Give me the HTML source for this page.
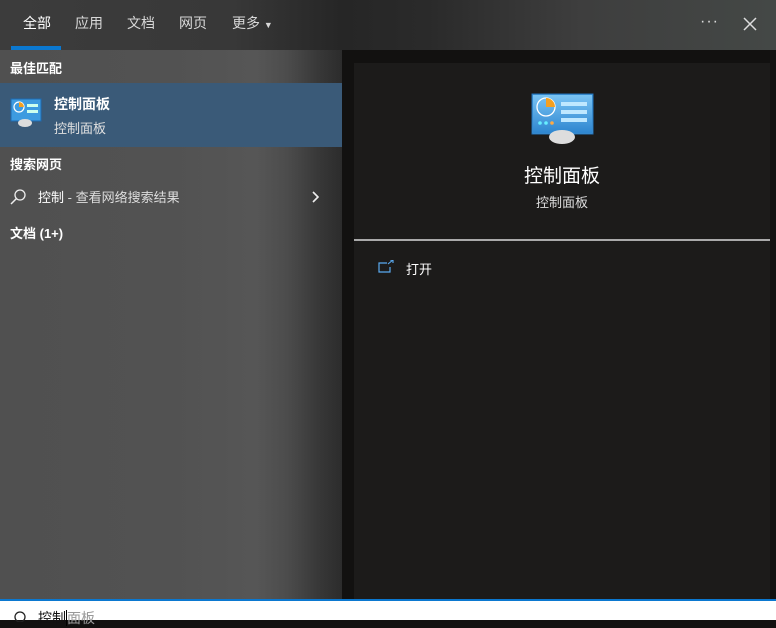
<!DOCTYPE html>
<html><head><meta charset="utf-8"><style>
*{margin:0;padding:0;box-sizing:border-box}
body{width:776px;height:620px;overflow:hidden;position:relative;font-family:"Liberation Sans","Noto Sans CJK SC",sans-serif;background:#121110}
.top{position:absolute;left:0;top:0;width:776px;height:50px;background:linear-gradient(90deg,#3c3c3c 0%,#383838 30%,#262626 44%,#2a2a2a 55%,#3e3e3e 75%,#444846 100%)}
.tab{position:absolute;top:13px;color:#d8d8d8;font-size:14px}
.left{position:absolute;left:0;top:50px;width:342px;height:549px;background:linear-gradient(90deg,#505050 0%,#525252 50%,#565656 75%,#4c4c4c 84%,#383838 93%,#2c2c2c 100%)}
.h{position:absolute;left:10px;color:#fff;font-size:13px;font-weight:bold}
.right{position:absolute;left:354px;top:63px;width:416px;height:536px;background:#1c1b1a}
</style></head><body>
<div class="top">
<div class="tab" style="left:23px;color:#fff">全部</div>
<div class="tab" style="left:75px">应用</div>
<div class="tab" style="left:127px">文档</div>
<div class="tab" style="left:179px">网页</div>
<div class="tab" style="left:232px">更多 <span style="font-size:9px">▼</span></div>
<div style="position:absolute;left:11px;top:46px;width:50px;height:4px;background:#0b78d0"></div>
<div style="position:absolute;left:700px;top:13px;color:#ddd;font-size:16px;letter-spacing:1px">···</div>
<svg style="position:absolute;left:743px;top:17px" width="14" height="14"><path d="M1 1L13 13M13 1L1 13" stroke="#ddd" stroke-width="1.5"/></svg>
</div>
<div class="left">
<div class="h" style="top:8px">最佳匹配</div>
<div style="position:absolute;left:0;top:33px;width:342px;height:64px;background:#3a5a78"></div>
<svg style="position:absolute;left:10px;top:48px" width="32" height="30"><rect x="1" y="1" width="30" height="22" fill="#3d9be0" stroke="#1d6ab0"/><circle cx="9" cy="9" r="5" fill="none" stroke="#fff" stroke-width="1.2"/><path d="M9 4a5 5 0 0 1 5 5h-5z" fill="#f5a020"/><rect x="17" y="6" width="11" height="3" fill="#cfe"/><rect x="17" y="12" width="11" height="3" fill="#cfe"/><ellipse cx="15" cy="25" rx="7" ry="4" fill="#ddd"/></svg>
<div style="position:absolute;left:54px;top:44px;color:#fff;font-size:14px;font-weight:bold">控制面板</div>
<div style="position:absolute;left:54px;top:68px;color:#e0e0e0;font-size:13px">控制面板</div>
<div class="h" style="top:104px">搜索网页</div>
<svg style="position:absolute;left:10px;top:139px" width="16" height="16"><circle cx="10" cy="6" r="5" fill="none" stroke="#eee" stroke-width="1.3"/><path d="M6.5 9.5L1 15" stroke="#eee" stroke-width="1.5"/></svg>
<div style="position:absolute;left:38px;top:137px;color:#fff;font-size:13px">控制 <span style="color:#ddd">- 查看网络搜索结果</span></div>
<svg style="position:absolute;left:312px;top:141px" width="8" height="12"><path d="M1 1L6 6L1 11" stroke="#eee" stroke-width="1.6" fill="none"/></svg>
<div class="h" style="top:173px">文档 (1+)</div>
</div>
<div class="right">
<svg style="position:absolute;left:177px;top:30px" width="64" height="52"><defs><linearGradient id="g" x1="0" y1="0" x2="0" y2="1"><stop offset="0" stop-color="#7ac4f4"/><stop offset="1" stop-color="#2e86d0"/></linearGradient></defs><rect x="1" y="1" width="61" height="40" fill="#4aa0e0" stroke="#2070b8"/><rect x="2" y="2" width="59" height="38" fill="url(#g)"/><circle cx="15" cy="14" r="9" fill="none" stroke="#fff" stroke-width="1.3"/><path d="M15 5a9 9 0 0 1 9 9h-9z" fill="#f5a020"/><rect x="30" y="9" width="26" height="4" fill="#bfe8ff"/><rect x="30" y="17" width="26" height="4" fill="#bfe8ff"/><rect x="30" y="25" width="26" height="4" fill="#bfe8ff"/><circle cx="9" cy="30" r="1.8" fill="#6ef"/><circle cx="15" cy="30" r="1.8" fill="#6ef"/><circle cx="21" cy="30" r="1.8" fill="#fa4"/><ellipse cx="31" cy="44" rx="13" ry="7" fill="#ddd"/></svg>
<div style="position:absolute;left:0;width:416px;top:98px;text-align:center;color:#fff;font-size:19px">控制面板</div>
<div style="position:absolute;left:0;width:416px;top:129px;text-align:center;color:#ddd;font-size:13px">控制面板</div>
<div style="position:absolute;left:0;top:176px;width:416px;height:2px;background:#aaa"></div>
<svg style="position:absolute;left:24px;top:197px" width="16" height="14"><path d="M9 3H1V12H12V7" stroke="#5aaaf0" fill="none" stroke-width="1.2"/><path d="M10 4L15 0M12 0H15V3" stroke="#5aaaf0" fill="none" stroke-width="1.1"/></svg>
<div style="position:absolute;left:52px;top:196px;color:#fff;font-size:13px">打开</div>
</div>
<div style="position:absolute;left:0;top:599px;width:776px;height:2px;background:#0b78d0"></div>
<div style="position:absolute;left:0;top:601px;width:776px;height:19px;background:#fff"></div>
<svg style="position:absolute;left:14px;top:610px" width="14" height="12"><circle cx="6" cy="7" r="5" fill="none" stroke="#222" stroke-width="1.3"/></svg>
<div style="position:absolute;left:38px;top:608px;font-size:14px;color:#111">控制<span style="border-left:1px solid #000;color:#999">面板</span></div>
</body></html>
